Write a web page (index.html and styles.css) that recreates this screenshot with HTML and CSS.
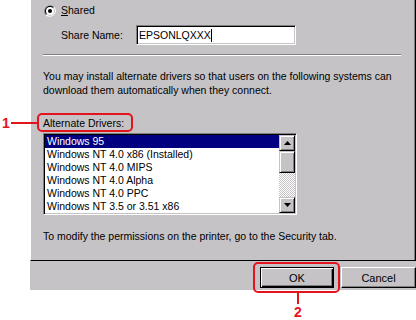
FILE: index.html
```html
<!DOCTYPE html>
<html lang="en">
<head>
    <meta charset="UTF-8">
    <title>Printer Sharing</title>
    <link rel="stylesheet" href="styles.css">
</head>
<body>
    <div class="dialog">
        <div class="panel">
            <div class="radio-row">
                <svg class="radio" width="12" height="12" viewBox="0 0 12 12">
                    <path d="M10.24 1.76 A6 6 0 0 0 1.76 10.24 Z" fill="#808080"/>
                    <path d="M1.76 10.24 A6 6 0 0 0 10.24 1.76 Z" fill="#fff"/>
                    <path d="M9.54 2.46 A5 5 0 0 0 2.46 9.54 Z" fill="#000"/>
                    <path d="M2.46 9.54 A5 5 0 0 0 9.54 2.46 Z" fill="#c6c3c6"/>
                    <circle cx="6" cy="6" r="4" fill="#fff"/>
                    <circle cx="6" cy="6" r="2" fill="#000"/>
                </svg>
                <span><u>S</u>hared</span>
            </div>

            <div class="share-row">
                <span class="share-label">Share Name:</span>
                <div class="edit">EPSONLQXXX<span class="caret"></span></div>
            </div>

            <div class="separator"></div>

            <p class="note">You may install alternate drivers so that users on the following systems can download them automatically when they connect.</p>

            <div class="list-label">Alternate Drivers:</div>
            <div class="listbox">
                <div class="rows">
                    <div class="row selected">Windows 95</div>
                    <div class="row">Windows NT 4.0 x86 (Installed)</div>
                    <div class="row">Windows NT 4.0 MIPS</div>
                    <div class="row">Windows NT 4.0 Alpha</div>
                    <div class="row">Windows NT 4.0 PPC</div>
                    <div class="row">Windows NT 3.5 or 3.51 x86</div>
                </div>
                <div class="scrollbar">
                    <div class="sb-btn">
                        <svg width="7" height="4" viewBox="0 0 7 4"><polygon points="3.5,0 7,4 0,4" fill="#000"/></svg>
                    </div>
                    <div class="sb-thumb"></div>
                    <div class="sb-track"></div>
                    <div class="sb-btn">
                        <svg width="7" height="4" viewBox="0 0 7 4"><polygon points="0,0 7,0 3.5,4" fill="#000"/></svg>
                    </div>
                </div>
            </div>

            <p class="security">To modify the permissions on the printer, go to the Security tab.</p>
        </div>

        <div class="footer">
            <button class="btn default">OK</button>
            <button class="btn">Cancel</button>
        </div>
    </div>

    <!-- callouts -->
    <div class="callout box-one"></div>
    <div class="callout-line line-one"></div>
    <span class="callout-num num-one">1</span>

    <div class="callout box-two"></div>
    <div class="callout-line line-two"></div>
    <span class="callout-num num-two">2</span>
</body>
</html>
```

FILE: styles.css
```css
body {
    margin: 0;
    width: 416px;
    height: 320px;
    overflow: hidden;
    background: #fff;
    font-family: "Liberation Sans", Arial, sans-serif;
    font-size: 10.5px;
    color: #000;
    position: relative;
}
.dialog {
    margin-left: 30px;
    width: 386px;
}
.panel {
    box-sizing: border-box;
    height: 261px;
    background: #c6c3c6;
    border-left: 1px solid #fff;
    border-right: 1px solid #000;
    border-bottom: 1px solid #000;
    box-shadow: inset -1px 0 #808080;
    padding: 4px 0 0 12px;
}
.radio-row {
    display: flex;
    align-items: center;
    height: 13px;
    margin-left: 1px;
    line-height: 13px;
}
.radio {
    margin-right: 5px;
}
.share-row {
    display: flex;
    align-items: center;
    height: 20px;
    margin: 8px 0 0 18px;
}
.share-label {
    width: 75px;
}
.edit {
    box-sizing: border-box;
    width: 160px;
    height: 20px;
    background: #fff;
    border: 1px solid;
    border-color: #808080 #fff #fff #808080;
    box-shadow: inset 1px 1px #000, inset -1px -1px #c6c3c6;
    padding: 0 0 0 2px;
    line-height: 18px;
    display: flex;
    align-items: center;
}
.caret {
    display: inline-block;
    width: 1px;
    height: 13px;
    background: #000;
}
.separator {
    width: 358px;
    height: 1px;
    background: #808080;
    border-bottom: 1px solid #fff;
    margin-top: 9px;
}
.note {
    margin: 13px 0 0;
    width: 362px;
    line-height: 14px;
}
.list-label {
    margin-top: 19px;
    line-height: 14px;
}
.listbox {
    box-sizing: border-box;
    display: flex;
    width: 254px;
    height: 82px;
    margin-top: 3px;
    background: #fff;
    border: 1px solid;
    border-color: #808080 #fff #fff #808080;
    box-shadow: inset 1px 1px #000, inset -1px -1px #c6c3c6;
    padding: 1px;
}
.rows {
    flex: 1;
}
.row {
    height: 13px;
    line-height: 13px;
    padding-left: 2px;
    white-space: nowrap;
}
.row.selected {
    background: #000080;
    color: #fff;
}
.scrollbar {
    width: 16px;
    display: flex;
    flex-direction: column;
}
.sb-btn, .sb-thumb {
    box-sizing: border-box;
    width: 16px;
    height: 16px;
    background: #c6c3c6;
    border: 1px solid;
    border-color: #c6c3c6 #000 #000 #c6c3c6;
    box-shadow: inset 1px 1px #fff, inset -1px -1px #808080;
    display: flex;
    align-items: center;
    justify-content: center;
}
.sb-thumb {
    height: 22px;
}
.sb-track {
    height: 24px;
    background: repeating-conic-gradient(#fff 0 25%, #c6c3c6 0 50%) 0 0 / 2px 2px;
}
.security {
    margin: 14px 0 0;
    line-height: 14px;
}
.footer {
    height: 29px;
    background: #c6c3c6;
    display: flex;
    justify-content: flex-end;
    align-items: flex-start;
    gap: 7px;
    padding-top: 6px;
    box-sizing: border-box;
}
.btn {
    box-sizing: border-box;
    width: 75px;
    height: 21px;
    background: #c6c3c6;
    font-family: "Liberation Sans", Arial, sans-serif;
    font-size: 11px;
    color: #000;
    border: 1px solid;
    border-color: #fff #000 #000 #fff;
    box-shadow: inset -1px -1px #808080;
    padding: 0;
}
.btn.default {
    width: 74px;
    border-color: #000;
    box-shadow: inset 1px 1px #fff, inset -1px -1px #000, inset -2px -2px #808080;
}
.callout {
    position: absolute;
    box-sizing: border-box;
    border: 2px solid #e3141e;
    border-radius: 5px;
}
.box-one {
    left: 37px;
    top: 113px;
    width: 96px;
    height: 19px;
}
.box-two {
    left: 253px;
    top: 262px;
    width: 87px;
    height: 31px;
}
.callout-line {
    position: absolute;
    background: #e3141e;
}
.line-one {
    left: 11px;
    top: 122px;
    width: 26px;
    height: 2px;
}
.line-two {
    left: 297px;
    top: 293px;
    width: 2px;
    height: 11px;
}
.callout-num {
    position: absolute;
    font-family: "Liberation Sans", Arial, sans-serif;
    font-weight: bold;
    font-size: 14px;
    line-height: 14px;
    color: #e3141e;
}
.num-one {
    left: 2px;
    top: 116px;
}
.num-two {
    left: 294px;
    top: 305px;
}
```
